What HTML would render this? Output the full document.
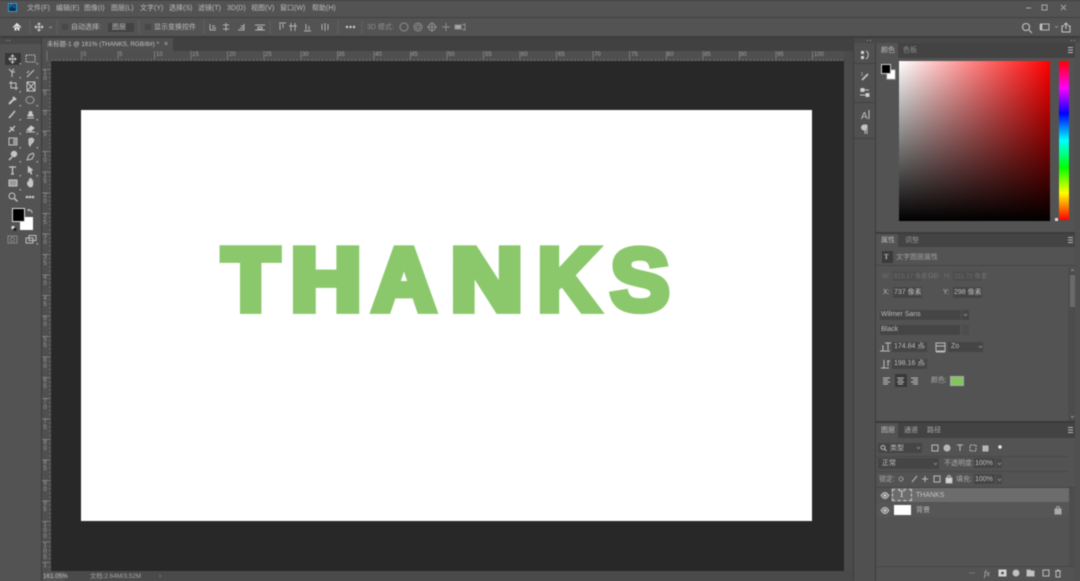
<!DOCTYPE html>
<html><head><meta charset="utf-8"><style>
html,body{margin:0;padding:0;background:#535353;width:1080px;height:581px;overflow:hidden}
#w{position:relative;width:1080px;height:581px;overflow:hidden;filter:blur(.45px);font-family:"Liberation Sans","Noto Sans CJK SC",sans-serif;font-size:7px;color:#bdbdbd;background:#535353}
#w div{position:absolute}
.t{white-space:nowrap;line-height:9px}
.d{color:#8c8c8c}
.r{font-size:6px;color:#9c9c9c;line-height:6px;width:6px;text-align:center;white-space:normal}
.h{font-size:6px;color:#a0a0a0;line-height:7px;top:52px}
.f{background:#454545}
svg{position:absolute;left:0;top:0}
</style></head><body><div id="w">

<!-- chrome bands -->
<div style="left:0;top:0;width:1080px;height:1px;background:#424242"></div>
<div style="left:0;top:17px;width:1080px;height:1px;background:#404040"></div>
<div style="left:0;top:36px;width:1080px;height:2px;background:#3c3c3c"></div>

<!-- tab bar and canvas -->
<div style="left:41px;top:38px;width:812px;height:13px;background:#414141"></div>
<div style="left:42px;top:38px;width:131px;height:14px;background:#505050"></div>
<div style="left:42px;top:51px;width:802px;height:10px;background:#4f4f4f;background-image:repeating-linear-gradient(90deg,#7a7a7a 0,#7a7a7a 1px,transparent 1px,transparent 36.55px);background-position:39px 0"></div>
<div style="left:51px;top:59px;width:793px;height:2px;background-image:repeating-linear-gradient(90deg,#6c6c6c 0,#6c6c6c 1px,transparent 1px,transparent 3.655px);background-position:30px 0"></div>
<div style="left:42px;top:61px;width:9px;height:510px;background:#4f4f4f;background-image:repeating-linear-gradient(180deg,#7a7a7a 0,#7a7a7a 1px,transparent 1px,transparent 20.55px);background-position:0 8px"></div>
<div style="left:49px;top:61px;width:2px;height:510px;background-image:repeating-linear-gradient(180deg,#6c6c6c 0,#6c6c6c 1px,transparent 1px,transparent 4.11px);background-position:0 8px"></div>
<div style="left:51px;top:61px;width:793px;height:510px;background:#282828"></div>
<div style="left:81px;top:110px;width:731px;height:411px;background:#fff"></div>
<div style="left:41px;top:38px;width:1px;height:543px;background:#3a3a3a"></div>
<div style="left:844px;top:51px;width:9px;height:530px;background:#4b4b4b"></div>
<div style="left:853px;top:38px;width:1px;height:543px;background:#3c3c3c"></div>
<div style="left:42px;top:571px;width:811px;height:10px;background:#4a4a4a"></div>

<!-- THANKS -->
<svg width="1080" height="581" style="z-index:2">
<g font-family="Liberation Sans" font-weight="700" font-size="90.1" fill="#8bc86b" stroke="#8bc86b" stroke-width="8" stroke-linejoin="miter" stroke-miterlimit="3">
<text transform="translate(222.600 310.100) scale(1.02 .975)">T</text>
<text transform="translate(290.800 310.100) scale(1.087 .975)">H</text>
<text transform="translate(372.800 310.100) scale(.96 .975)">A</text>
<text transform="translate(450.700 310.100) scale(1.107 .975)">N</text>
<text transform="translate(538 310.100) scale(.92 .975)">K</text>
<text transform="translate(610.200 310.100) scale(.99 .975)" stroke-width="6.500">S</text>
</g>
</svg>

<!-- menu -->
<div style="left:8px;top:3px;width:9px;height:9px;background:#0b2e44;border:1px solid #2b9fe0;box-sizing:border-box;color:#31a8ff;font-size:5px;line-height:7px;text-align:center">Ps</div>
<div class="t" style="left:27px;top:4px">文件(F)</div>
<div class="t" style="left:56px;top:4px">编辑(E)</div>
<div class="t" style="left:84px;top:4px">图像(I)</div>
<div class="t" style="left:111px;top:4px">图层(L)</div>
<div class="t" style="left:140px;top:4px">文字(Y)</div>
<div class="t" style="left:169px;top:4px">选择(S)</div>
<div class="t" style="left:198px;top:4px">滤镜(T)</div>
<div class="t" style="left:227px;top:4px">3D(D)</div>
<div class="t" style="left:251px;top:4px">视图(V)</div>
<div class="t" style="left:280px;top:4px">窗口(W)</div>
<div class="t" style="left:312px;top:4px">帮助(H)</div>

<!-- options -->
<div class="t" style="left:71px;top:23px">自动选择:</div>
<div style="left:108px;top:23px;width:26px;height:9px;background:#434343"></div>
<div class="t" style="left:112px;top:23px">图层</div>
<div class="t" style="left:154px;top:23px">显示变换控件</div>
<div class="t d" style="left:367px;top:23px">3D 模式:</div>
<div style="left:62px;top:24px;width:6px;height:6px;background:#484848"></div>
<div style="left:145px;top:24px;width:6px;height:6px;background:#484848"></div>

<!-- doc tab -->
<div class="t" style="left:47px;top:40px;color:#c4c4c4;font-size:6.3px">未标题-1 @ 161% (THANKS, RGB/8#) *</div>
<div class="t" style="left:164px;top:40px">×</div>

<!-- h ruler labels -->
<div class="h" style="left:83px">0</div><div class="h" style="left:119px">5</div><div class="h" style="left:156px">10</div><div class="h" style="left:192px">15</div><div class="h" style="left:229px">20</div><div class="h" style="left:265px">25</div><div class="h" style="left:302px">30</div><div class="h" style="left:338px">35</div><div class="h" style="left:375px">40</div><div class="h" style="left:411px">45</div><div class="h" style="left:448px">50</div><div class="h" style="left:485px">55</div><div class="h" style="left:521px">60</div><div class="h" style="left:558px">65</div><div class="h" style="left:594px">70</div><div class="h" style="left:631px">75</div><div class="h" style="left:667px">80</div><div class="h" style="left:704px">85</div><div class="h" style="left:740px">90</div><div class="h" style="left:777px">95</div><div class="h" style="left:814px">100</div>

<!-- v ruler labels -->
<div class="r" style="left:42px;top:70px">1<br>0</div><div class="r" style="left:42px;top:91px">5</div><div class="r" style="left:42px;top:111px">0</div><div class="r" style="left:42px;top:132px">5</div><div class="r" style="left:42px;top:152px">1<br>0</div><div class="r" style="left:42px;top:173px">1<br>5</div><div class="r" style="left:42px;top:193px">2<br>0</div><div class="r" style="left:42px;top:214px">2<br>5</div><div class="r" style="left:42px;top:234px">3<br>0</div><div class="r" style="left:42px;top:255px">3<br>5</div><div class="r" style="left:42px;top:275px">4<br>0</div><div class="r" style="left:42px;top:296px">4<br>5</div><div class="r" style="left:42px;top:316px">5<br>0</div><div class="r" style="left:42px;top:337px">5<br>5</div><div class="r" style="left:42px;top:358px">6<br>0</div><div class="r" style="left:42px;top:378px">6<br>5</div><div class="r" style="left:42px;top:399px">7<br>0</div><div class="r" style="left:42px;top:419px">7<br>5</div><div class="r" style="left:42px;top:440px">8<br>0</div><div class="r" style="left:42px;top:460px">8<br>5</div><div class="r" style="left:42px;top:481px">9<br>0</div><div class="r" style="left:42px;top:501px">9<br>5</div><div class="r" style="left:42px;top:522px">1<br>0<br>0</div><div class="r" style="left:42px;top:543px">1<br>0<br>5</div><div class="r" style="left:42px;top:563px">1</div>

<!-- status -->
<div class="t" style="left:43px;top:572px;color:#c4c4c4;background:#555;width:22px;font-size:6.300px">161.05%</div>
<div class="t d" style="left:90px;top:572px;color:#a4a4a4;font-size:6.300px">文档:2.64M/3.52M</div>
<div class="t d" style="left:159px;top:572px">›</div>

<!-- left toolbar -->
<div style="left:0;top:38px;width:41px;height:6px;background:#484848"></div>
<div style="left:5px;top:53px;width:16px;height:12px;background:#383838"></div>
<div style="left:12px;top:208px;width:13px;height:14px;background:#000;border:1px solid #ddd;box-sizing:border-box;z-index:2"></div>
<div style="left:20px;top:217px;width:13px;height:13px;background:#fff"></div>

<!-- right dock -->
<div style="left:854px;top:38px;width:226px;height:5px;background:#484848"></div>
<div style="left:854px;top:43px;width:21px;height:538px;background:#505050"></div>
<div style="left:854px;top:63px;width:21px;height:1px;background:#414141"></div>
<div style="left:854px;top:102px;width:21px;height:1px;background:#414141"></div>
<div style="left:854px;top:138px;width:21px;height:1px;background:#414141"></div>
<div style="left:875px;top:43px;width:1px;height:538px;background:#3c3c3c"></div>
<div style="left:1075px;top:43px;width:5px;height:538px;background:#505050"></div>

<!-- color panel -->
<div style="left:876px;top:43px;width:199px;height:15px;background:#434343"></div>
<div style="left:876px;top:43px;width:22px;height:15px;background:#535353"></div>
<div class="t" style="left:881px;top:46px">颜色</div>
<div class="t d" style="left:903px;top:46px">色板</div>
<div style="left:899px;top:61px;width:151px;height:160px;background:linear-gradient(to top,#000,rgba(0,0,0,0)),linear-gradient(to right,#fff,#f00)"></div>
<div style="left:1059px;top:61px;width:10px;height:159px;background:linear-gradient(to bottom,#f00 0,#f0f 17%,#00f 33%,#0ff 50%,#0f0 67%,#ff0 83%,#f00 100%)"></div>
<div style="left:1055px;top:218px;width:3px;height:3px;background:#ddd"></div>
<div style="left:886px;top:69px;width:10px;height:11px;background:#fff;border:1px solid #777;box-sizing:border-box"></div>
<div style="left:881px;top:64px;width:10px;height:10px;background:#000;border:1px solid #ccc;box-sizing:border-box"></div>
<div style="left:875px;top:232px;width:200px;height:2px;background:#3c3c3c"></div>

<!-- properties -->
<div style="left:876px;top:234px;width:199px;height:13px;background:#434343"></div>
<div style="left:876px;top:234px;width:22px;height:13px;background:#535353"></div>
<div class="t" style="left:881px;top:236px">属性</div>
<div class="t d" style="left:905px;top:236px">调整</div>
<div style="left:876px;top:265px;width:199px;height:1px;background:#454545"></div>
<div style="left:882px;top:251px;width:11px;height:12px;background:#3a3a3a"></div>
<div class="t" style="left:884px;top:253px;font-weight:700;font-family:'Liberation Serif'">T</div>
<div class="t" style="left:896px;top:253px;color:#a0a0a0">文字图层属性</div>
<div style="left:1068px;top:268px;width:7px;height:153px;background:#4c4c4c"></div>
<div style="left:1070px;top:275px;width:5px;height:32px;background:#6a6a6a"></div>
<div class="t d" style="left:882px;top:272px;color:#6e6e6e">W:</div>
<div style="left:893px;top:271px;width:28px;height:10px;background:#4d4d4d"></div>
<div class="t d" style="left:894px;top:272px;color:#6e6e6e;font-size:6.300px">815.17 像素</div>
<div class="t d" style="left:928px;top:272px;color:#777">GĐ</div>
<div class="t d" style="left:944px;top:272px;color:#6e6e6e">H:</div>
<div style="left:953px;top:271px;width:29px;height:10px;background:#4d4d4d"></div>
<div class="t d" style="left:954px;top:272px;color:#6e6e6e;font-size:6.300px">211.72 像素</div>
<div class="t" style="left:883px;top:288px">X:</div>
<div class="f" style="left:893px;top:287px;width:29px;height:11px"></div>
<div class="t" style="left:894px;top:288px">737 像素</div>
<div class="t" style="left:943px;top:288px">Y:</div>
<div class="f" style="left:953px;top:287px;width:29px;height:11px"></div>
<div class="t" style="left:954px;top:288px">298 像素</div>
<div class="f" style="left:880px;top:310px;width:81px;height:10px"></div>
<div class="t" style="left:881px;top:310px">Wilmer Sans</div>
<div class="f" style="left:962px;top:310px;width:7px;height:10px"></div>
<div class="f" style="left:880px;top:325px;width:80px;height:10px"></div>
<div class="t" style="left:881px;top:325px">Black</div>
<div style="left:962px;top:325px;width:7px;height:10px;background:#4d4d4d"></div>
<div class="f" style="left:892px;top:342px;width:35px;height:10px"></div>
<div class="t" style="left:894px;top:342px">174.84 点</div>
<div class="f" style="left:948px;top:342px;width:35px;height:10px"></div>
<div class="t" style="left:951px;top:342px">Zo</div>
<div class="f" style="left:892px;top:359px;width:35px;height:10px"></div>
<div class="t" style="left:894px;top:359px">198.16 点</div>
<div style="left:895px;top:374px;width:12px;height:13px;background:#383838"></div>
<div class="t" style="left:931px;top:376px;color:#aaa">颜色:</div>
<div style="left:950px;top:376px;width:14px;height:10px;background:#83c660;border:1px solid #aaa;box-sizing:border-box"></div>
<div style="left:875px;top:421px;width:200px;height:2px;background:#3a3a3a"></div>

<!-- layers -->
<div style="left:876px;top:423px;width:199px;height:15px;background:#434343"></div>
<div style="left:876px;top:423px;width:22px;height:15px;background:#535353"></div>
<div class="t" style="left:881px;top:426px">图层</div>
<div class="t d" style="left:904px;top:426px;color:#aaa">通道</div>
<div class="t d" style="left:927px;top:426px;color:#aaa">路径</div>
<div class="f" style="left:878px;top:443px;width:44px;height:10px"></div>
<div class="t" style="left:890px;top:444px">类型</div>
<div style="left:876px;top:456px;width:192px;height:1px;background:#484848"></div>
<div class="f" style="left:878px;top:458px;width:61px;height:11px"></div>
<div class="t" style="left:882px;top:459px">正常</div>
<div class="t" style="left:944px;top:459px;color:#aaa">不透明度:</div>
<div class="f" style="left:974px;top:458px;width:21px;height:10px"></div>
<div class="t" style="left:975px;top:459px">100%</div>
<div style="left:996px;top:458px;width:6px;height:10px;background:#484848"></div>
<div style="left:876px;top:471px;width:192px;height:1px;background:#484848"></div>
<div class="t" style="left:879px;top:475px;color:#aaa">锁定:</div>
<div class="t" style="left:956px;top:475px;color:#aaa">填充:</div>
<div class="f" style="left:974px;top:474px;width:21px;height:10px"></div>
<div class="t" style="left:975px;top:475px">100%</div>
<div style="left:996px;top:474px;width:6px;height:10px;background:#484848"></div>
<div style="left:876px;top:487px;width:199px;height:1px;background:#444"></div>
<div style="left:1069px;top:488px;width:6px;height:78px;background:#4d4d4d"></div>
<div style="left:876px;top:488px;width:15px;height:15px;background:#535353"></div>
<div style="left:891px;top:488px;width:178px;height:14px;background:#6c6c6c"></div>
<div style="left:876px;top:503px;width:193px;height:14px;background:#565656"></div>
<div style="left:892px;top:489px;width:20px;height:12px;border:1px dashed #cfcfcf;box-sizing:border-box"></div>
<div class="t" style="left:899px;top:490px;font-family:'Liberation Serif';font-size:9px;color:#e0e0e0">T</div>
<div class="t" style="left:916px;top:491px;color:#c4c4c4">THANKS</div>
<div style="left:894px;top:505px;width:17px;height:10px;background:#fff"></div>
<div class="t" style="left:916px;top:506px">背景</div>
<div style="left:876px;top:566px;width:199px;height:1px;background:#474747"></div>

<!-- icons -->
<svg width="1080" height="581" style="z-index:3" fill="none" stroke="#c8c8c8" stroke-width="1">
<!-- options -->
<path d="M13 27l4-4 4 4M14.500 26.500v4h2v-2h1v2h2v-4" fill="#e0e0e0" stroke="none"/>
<path d="M13 27.500l4-4 4 4" stroke="#e0e0e0"/>
<path d="M35 27h8M39 23v8M37.500 24.500l1.500-1.500 1.500 1.500M37.500 29.500l1.500 1.500 1.500-1.500M36.500 25.500l-1.500 1.500 1.500 1.500M41.500 25.500l1.500 1.500-1.500 1.500"/>
<path d="M49 26.500l1.500 1.500 1.500-1.500" stroke="#888"/>
<path stroke="#606060" d="M30 20v14M204 20v14M270 20v14M338 20v14M362 20v14M57 20v14M139 20v14"/>
<g stroke="#b0b0b0">
<path d="M210 24v6h6M212 26h3M212 28h4M226 23v8M223 25h6M223 29h6M244 24v6h-6M241 26h3M240 28h4M255 25h10M255 30h10M258 27h4v2h-4z"/>
<path d="M279 23h7M280 24v6M283 24v4M291 23v8M295 23v8M289 26h8M304 31h7M306 24v6M309 26v4M325 23v8M328 24v6M322 24v6"/>
</g>
<g fill="#d0d0d0" stroke="none"><circle cx="347" cy="27" r="1.200"/><circle cx="350.500" cy="27" r="1.200"/><circle cx="354" cy="27" r="1.200"/></g>
<g stroke="#8f8f8f"><circle cx="404" cy="27" r="4"/><circle cx="418" cy="27" r="4"/><circle cx="418" cy="27" r="2"/><circle cx="432" cy="27" r="3.500"/><path d="M432 22v10M427 27h10M446 23v8M442 27h8"/><rect x="455" y="25" width="6" height="4" fill="#a8a8a8"/><path d="M462 25l3-1v6l-3-1"/></g>
<!-- right top -->
<path d="M1026 23.500a3.500 3.500 0 1 0 .1 0M1029 30l3 3" />
<rect x="1041" y="24" width="8" height="6" stroke="#b8b8b8"/><path d="M1041 24v6" stroke-width="2.500"/>
<path d="M1055 26l1.500 1.500 1.500-1.500" stroke="#888"/>
<path d="M1064 26h-2v6h8v-6h-2M1066 23v6M1064 25l2-2 2 2"/>
<path d="M1026 8h5M1042 5h5v5h-5zM1061 5l5 5M1066 5l-5 5" stroke="#a8a8a8"/>
<!-- grip -->
<path stroke="#a0a0a0" d="M6 40.500h1M9 40.500h1M867 40.500h1M870 40.500h1M1071 40.500h1M1074 40.500h1"/>
<!-- panel menus -->
<path stroke="#b8b8b8" d="M1068 47.500h5M1068 50h5M1068 52.500h5M1068 237.500h5M1068 240h5M1068 242.500h5M1068 427.500h5M1068 430h5M1068 432.500h5"/>
<!-- left tools col 1 -->
<g stroke="#c8c8c8">
<path d="M9 59h7M12.500 55v8M11 56.500l1.500-1.500 1.500 1.500M11 61.500l1.500 1.500 1.500-1.500M10.500 57.500l-1.500 1.500 1.500 1.500M14.500 57.500l1.500 1.500-1.500 1.500"/>
<rect x="26" y="55" width="9" height="7" stroke-dasharray="1.500 1"/>
<path d="M9 69l3 3h3M12 72v5M14 69l-2 2"/>
<path d="M27 77l7-7M29 71l-2 2" />
<path d="M9 83h7v7M11 81v7h7" /><rect x="27" y="82" width="8" height="9"/><path d="M27 82l8 9M35 82l-8 9"/>
<path d="M9 104l5-5M13 97l3 3" stroke-width="2"/>
<ellipse cx="30" cy="100" rx="4" ry="3.500" stroke-dasharray="1.500 .8"/>
<path d="M9 118l6-7" stroke-width="1.500"/>
<path d="M27 118h7M28 116h5v-1h-1v-2a1.500 1.500 0 1 0-3 0v2h-1z" fill="#c8c8c8"/>
<path d="M9 132l6-6M10 127l4 4" stroke-width="1.300"/>
<path d="M26 132h9M27 130l4-4 3 2-3 3z" fill="#c8c8c8"/>
<rect x="9" y="138" width="8" height="7"/><rect x="13" y="138" width="4" height="7" fill="#999" stroke="none"/>
<path d="M29 139c3-2 6 0 4 3l-2 2-1 2-1-2z" fill="#bbb"/>
<path d="M9 160l3-3" stroke-width="1.500"/><circle cx="14" cy="154" r="2.700" fill="#c4c4c4"/>
<path d="M27 160l2-5 4-2 1 2-2 4z"/>
</g>
<g fill="#c8c8c8" stroke="#c8c8c8">
<path d="M9 167h7M12.500 167v7M11 174h3" stroke-width="1.300" fill="none"/>
<path d="M28 166l5 4-2 1 1 3-1 .5-1.500-3-1.500 1.500z" stroke-width=".4"/>
<rect x="9" y="180" width="8" height="6" fill="#9a9a9a"/>
<path d="M27 184l1-3 1 1v-3h1v3-4h1v4-3h1v3l1-2v5l-1 2h-3z" stroke-width=".4"/>
<circle cx="12" cy="196" r="3" fill="none"/><path d="M14.500 198.500l3 3" fill="none" stroke-width="1.400"/>
<circle cx="27" cy="197" r=".8"/><circle cx="30" cy="197" r=".8"/><circle cx="33" cy="197" r=".8"/>
</g>
<path d="M29 210c2 0 3 1 3 3M29 209l-1 1 1 1" stroke="#c8c8c8"/>
<rect x="11.500" y="226" width="3" height="3" fill="#ddd" stroke="none"/><rect x="13.500" y="228" width="3" height="3" fill="#222" stroke="none"/>
<rect x="8" y="236" width="9" height="7" stroke="#8a8a8a"/><circle cx="12.500" cy="239.500" r="2" stroke="#8a8a8a"/>
<rect x="26" y="238" width="7" height="5" stroke="#c0c0c0"/><rect x="29" y="235.500" width="7" height="5" stroke="#c0c0c0"/>
<!-- corner triangles in toolbar -->
<path fill="#a8a8a8" stroke="none" d="M19.500 63h1.500v1.500h-1.500zM36.500 63h1.500v1.500h-1.500zM19.500 77h1.500v1.500h-1.500zM36.500 77h1.500v1.500h-1.500zM19.500 91h1.500v1.500h-1.500zM19.500 105h1.500v1.500h-1.500zM36.500 105h1.500v1.500h-1.500zM19.500 119h1.500v1.500h-1.500zM36.500 119h1.500v1.500h-1.500zM19.500 133h1.500v1.500h-1.500zM36.500 133h1.500v1.500h-1.500zM19.500 147h1.500v1.500h-1.500zM36.500 147h1.500v1.500h-1.500zM19.500 161h1.500v1.500h-1.500zM36.500 161h1.500v1.500h-1.500zM19.500 175h1.500v1.500h-1.500zM36.500 175h1.500v1.500h-1.500zM19.500 189h1.500v1.500h-1.500zM36.500 243h1.500v1.500h-1.500z"/>
<!-- dock icons -->
<g stroke="#c4c4c4">
<path d="M861 51h3v3h-3zM861 56h3v3h-3z" fill="#d4d4d4" stroke="none"/><path d="M866 51c3 1 3 6 0 8"/>
<path d="M862 80l6-6" stroke-width="1.800"/><path d="M861 73h2M861 75h2" stroke="#999"/>
<path d="M860 90h9M860 95h9"/><rect x="861" y="88.500" width="3" height="3" fill="#d4d4d4"/><rect x="866" y="93.500" width="3" height="3" fill="#d4d4d4"/>
<text x="861" y="119" font-family="Liberation Sans" font-size="10" fill="#c0c0c0" stroke="none">A</text><path d="M869 110v9"/>
<path d="M865 125v9M867 125v9M867 125h-3a2 2 0 0 0 0 5h2" fill="#c4c4c4"/>
</g>
<!-- properties icons -->
<g stroke="#bcbcbc">
<path d="M885 343h6M888 343v7M880 351h10M882 346h1v5" />
<rect x="936" y="343" width="9" height="8" /><path d="M936 346h9M936 352h9"/>
<path d="M884 360v8M881 368h8M887 361h3M888 361v5" />
<path stroke-width=".9" d="M883 378h7M883 380h5M883 382h7M883 384h5M897 378h7M898 380h5M897 382h7M898 384h5M911 378h7M913 380h5M911 382h7M913 384h5"/>
</g>
<path stroke="#888" d="M922 346l1.500 1.500 1.500-1.500M979 346l1.500 1.500 1.500-1.500M922 363l1.500 1.500 1.500-1.500M964 314l1.500 1.500 1.500-1.500M934 463l1.500 1.500 1.500-1.500M917 447l1.500 1.500 1.500-1.500M998 463l1.500 1.500 1.500-1.500M998 479l1.500 1.500 1.500-1.500"/>
<!-- layers -->
<g stroke="#bcbcbc">
<circle cx="883" cy="447.500" r="2"/><path d="M884.500 449l2 2"/>
<rect x="932" y="445" width="6" height="6"/><circle cx="947" cy="448" r="3" fill="#b4b4b4"/><path d="M957 445h6M960 445v6"/><rect x="970" y="445" width="6" height="6" stroke-dasharray="2 1"/><rect x="983" y="446" width="5" height="5" fill="#b4b4b4"/>
<circle cx="1000" cy="447" r="1.700" fill="#eee" stroke="none"/>
<circle cx="901" cy="479" r="2" stroke-dasharray="1 .6"/><path d="M912 482l5-6M925 476v6M922 479h6"/><rect x="934" y="476" width="6" height="6"/><rect x="946" y="478" width="6" height="5" fill="#d4d4d4"/><path d="M947.500 478v-1a1.500 1.500 0 0 1 3 0v1"/>
<path d="M881 495.500c2-2.500 2.500-3 4-3s2 .5 4 3c-2 2.500-2.500 3-4 3s-2-.5-4-3zM881 510.500c2-2.500 2.500-3 4-3s2 .5 4 3c-2 2.500-2.500 3-4 3s-2-.5-4-3z" fill="#888"/>
<circle cx="885" cy="495.500" r="1" fill="#eee" stroke="none"/><circle cx="885" cy="510.500" r="1" fill="#eee" stroke="none"/>
<rect x="1055" y="509" width="6" height="5" fill="#aaa" stroke="#aaa"/><path d="M1056.500 509v-1a1.500 1.500 0 0 1 3 0v1" stroke="#aaa"/>
<path d="M969 573h6" stroke="#777"/>
<rect x="999" y="570" width="7" height="6" fill="#d4d4d4" stroke="#d4d4d4"/><circle cx="1002.500" cy="573" r="1.300" fill="#444" stroke="none"/>
<circle cx="1016" cy="573" r="3" fill="#c4c4c4"/>
<path d="M1027 571h7v5h-7zM1027 571v-1h3l1 1" fill="#c4c4c4"/>
<rect x="1043" y="570" width="6" height="6"/><path d="M1055 571h6M1056 571v6h4v-6M1057 570h2"/>
</g>
<text x="984" y="576" font-family="Liberation Serif" font-style="italic" font-size="8" fill="#c0c0c0" stroke="none">fx</text>
<!-- scroll arrow -->
<path d="M1071 271l1.500-1.500 1.500 1.500M1071 416l1.500 1.500 1.500-1.500" stroke="#888"/>
</svg>
</div></body></html>
